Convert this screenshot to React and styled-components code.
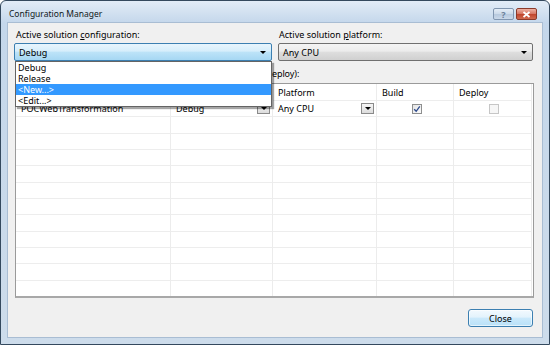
import React from 'react'
import styled, { createGlobalStyle } from 'styled-components'

const GlobalStyle = createGlobalStyle`
  html, body { margin: 0; padding: 0; }
  body {
    width: 550px;
    height: 345px;
    overflow: hidden;
    font-family: "Noto Sans", "Open Sans", sans-serif;
    font-size: 9px;
    color: #000;
  }
`

const cols = '155px 102px 104px 77px 78px'

const Window = styled.div`
  width: 550px;
  height: 345px;
  box-sizing: border-box;
  border: 1px solid #34495e;
  border-radius: 6px 6px 0 0;
  background: linear-gradient(#e2ecf7, #c4d7eb 22px, #cddceb);
  display: flex;
  flex-direction: column;
  padding: 0 6px 6px;
`

const TitleBar = styled.div`
  height: 21px;
  display: flex;
  align-items: flex-start;
  padding-left: 2px;
`

const Title = styled.div`
  font-size: 8.5px;
  padding-top: 7px;
  color: #101820;
`

const Captions = styled.div`
  margin-left: auto;
  margin-right: 6px;
  margin-top: 7px;
  display: flex;
  gap: 2px;
`

const CaptionBtn = styled.div`
  width: 21px;
  height: 12px;
  box-sizing: border-box;
  border: 1px solid ${p => (p.$close ? '#8b3a2a' : '#8196b0')};
  border-radius: 2px;
  background: ${p =>
    p.$close
      ? 'linear-gradient(#eeb1a3, #d5735f 50%, #c0432b 51%, #d06a4f)'
      : 'linear-gradient(#e4edf7, #cbd9e9 50%, #b7c9de 51%, #c9d8e9)'};
  display: flex;
  align-items: center;
  justify-content: center;
  color: #6a7f99;
  font-size: 9px;
  font-weight: bold;
  line-height: 1;
`

const Client = styled.div`
  flex: 1;
  background: #f0f0f0;
  border: 1px solid #a9bdd3;
  display: flex;
  flex-direction: column;
  padding: 0 9px 0 6px;
`

const TopRow = styled.div`
  display: grid;
  grid-template-columns: 258px 255px;
  gap: 6px;
  margin-top: 6px;
`

const Field = styled.div`
  display: flex;
  flex-direction: column;
  gap: 2px;
  position: relative;
  z-index: ${p => (p.$open ? 5 : 1)};
`

const Label = styled.div`
  height: 12px;
  line-height: 12px;
  padding-left: ${p => p.$indent || 2}px;
  white-space: nowrap;
  u { text-decoration: underline; }
`

const Combo = styled.div`
  position: relative;
  height: 18px;
  box-sizing: border-box;
  border: 1px solid ${p => (p.$focused ? '#3c7fb1' : '#707070')};
  border-radius: 2px;
  background: ${p =>
    p.$focused
      ? 'linear-gradient(#e8f5fd 0%, #d6eefb 45%, #bde3f8 50%, #a6d7f3 100%)'
      : 'linear-gradient(#f4f4f4 0%, #ececec 45%, #dedede 50%, #d0d0d0 100%)'};
  display: flex;
  align-items: center;
  padding: 0 5px 0 4px;
`

const Arrow = styled.span`
  margin-left: ${p => (p.$inline ? 0 : 'auto')};
  width: 0;
  height: 0;
  border-left: 3px solid transparent;
  border-right: 3px solid transparent;
  border-top: 3px solid #000;
`

const DropList = styled.div`
  position: absolute;
  top: 32px;
  left: 1px;
  right: 0;
  box-sizing: border-box;
  background: #fff;
  border: 1px solid #646464;
  box-shadow: 2px 2px 1px rgba(0, 0, 0, 0.35);
`

const DropItem = styled.div`
  height: 11px;
  line-height: 11px;
  padding-left: 2px;
  background: ${p => (p.$selected ? '#3399ff' : 'transparent')};
  color: ${p => (p.$selected ? '#fff' : '#000')};
`

const ContextLabel = styled(Label)`
  margin-top: 7px;
  letter-spacing: -0.1px;
`

const List = styled.div`
  margin-top: 3px;
  height: 215px;
  box-sizing: border-box;
  border: 1px solid #9a9a9a;
  border-bottom: 2px solid #a8a8a8;
  background: #fff;
  overflow: hidden;
  margin-right: -1px;
  margin-left: 1px;
`

const Row = styled.div`
  display: grid;
  grid-template-columns: ${cols};
  height: ${p => (p.$header ? '17px' : '16.33px')};
`

const Cell = styled.div`
  box-sizing: border-box;
  border-right: 1px solid #ececec;
  border-bottom: 1px solid #ededed;
  display: flex;
  align-items: center;
  justify-content: ${p => (p.$center ? 'center' : 'flex-start')};
  padding: 0 2px 0 5px;
  white-space: nowrap;
  overflow: hidden;
`

const CellButton = styled.div`
  margin-left: auto;
  width: 13px;
  height: 11px;
  box-sizing: border-box;
  border: 1px solid #8a8a8a;
  background: linear-gradient(#f6f6f6, #dcdcdc);
  display: flex;
  align-items: center;
  justify-content: center;
`

const Check = styled.div`
  width: 10px;
  height: 10px;
  box-sizing: border-box;
  border: 1px solid ${p => (p.$disabled ? '#c6c6c6' : '#8e8f8f')};
  background: ${p => (p.$disabled ? '#f6f6f6' : 'linear-gradient(135deg, #e4e4e4, #fbfbfb)')};
  display: flex;
  align-items: center;
  justify-content: center;
`

const Footer = styled.div`
  margin-top: 11px;
  display: flex;
  justify-content: flex-end;
`

const Button = styled.div`
  width: 65px;
  height: 18px;
  box-sizing: border-box;
  border: 1px solid #3c7fb1;
  border-radius: 3px;
  background: linear-gradient(#f2f9fe 0%, #e3f3fc 45%, #cbe9fb 50%, #b9e1f8 100%);
  box-shadow: inset 0 0 0 1px rgba(255, 255, 255, 0.6);
  display: flex;
  align-items: center;
  justify-content: center;
`

const CheckMark = () => (
  <svg width="8" height="8" viewBox="0 0 8 8">
    <path d="M1.2 4.2 L3.2 6.3 L6.8 1.3" fill="none" stroke="#2d4a8c" strokeWidth="1.3" />
  </svg>
)

const CloseGlyph = () => (
  <svg width="9" height="7" viewBox="0 0 9 7">
    <path d="M1.5 1 L7.5 6 M7.5 1 L1.5 6" stroke="#fff" strokeWidth="1.8" />
  </svg>
)

const emptyRows = Array.from({ length: 12 })

export default function App() {
  return (
    <>
      <GlobalStyle />
      <Window>
        <TitleBar>
          <Title>Configuration Manager</Title>
          <Captions>
            <CaptionBtn>?</CaptionBtn>
            <CaptionBtn $close>
              <CloseGlyph />
            </CaptionBtn>
          </Captions>
        </TitleBar>
        <Client>
          <TopRow>
            <Field $open>
              <Label>
                Active solution <u>c</u>onfiguration:
              </Label>
              <Combo $focused>
                Debug
                <Arrow />
              </Combo>
              <DropList>
                <DropItem>Debug</DropItem>
                <DropItem>Release</DropItem>
                <DropItem $selected>&lt;New...&gt;</DropItem>
                <DropItem>&lt;Edit...&gt;</DropItem>
              </DropList>
            </Field>
            <Field>
              <Label $indent={1}>
                Active solution <u>p</u>latform:
              </Label>
              <Combo>
                Any CPU
                <Arrow />
              </Combo>
            </Field>
          </TopRow>
          <ContextLabel>
            Project contexts (check the project configurations to build or deploy):
          </ContextLabel>
          <List>
            <Row $header>
              <Cell>Project</Cell>
              <Cell>Configuration</Cell>
              <Cell>Platform</Cell>
              <Cell>Build</Cell>
              <Cell>Deploy</Cell>
            </Row>
            <Row>
              <Cell>POCWebTransformation</Cell>
              <Cell>
                Debug
                <CellButton>
                  <Arrow $inline />
                </CellButton>
              </Cell>
              <Cell>
                Any CPU
                <CellButton>
                  <Arrow $inline />
                </CellButton>
              </Cell>
              <Cell $center>
                <Check>
                  <CheckMark />
                </Check>
              </Cell>
              <Cell $center>
                <Check $disabled />
              </Cell>
            </Row>
            {emptyRows.map((_, i) => (
              <Row key={i}>
                <Cell />
                <Cell />
                <Cell />
                <Cell />
                <Cell />
              </Row>
            ))}
          </List>
          <Footer>
            <Button>Close</Button>
          </Footer>
        </Client>
      </Window>
    </>
  )
}
